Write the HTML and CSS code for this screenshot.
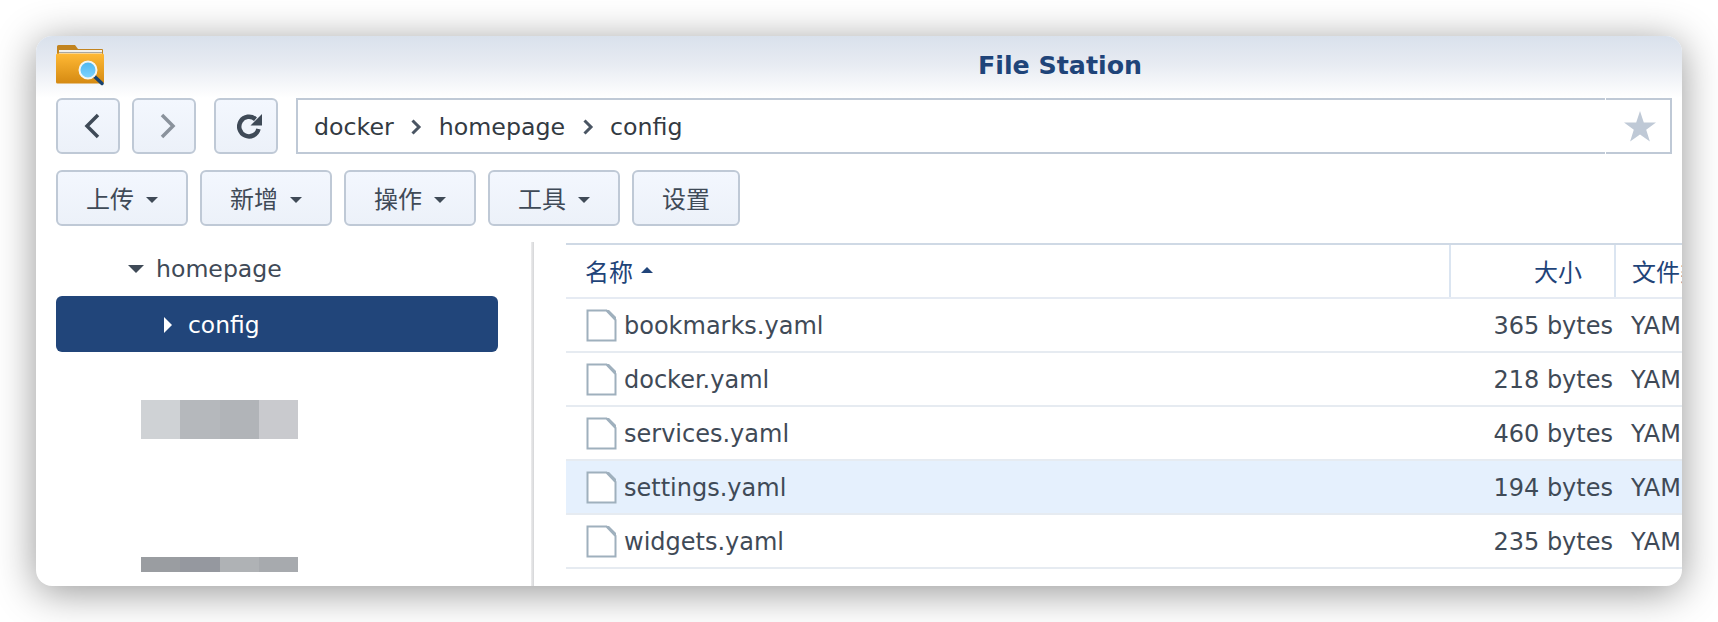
FILE: index.html
```html
<!DOCTYPE html>
<html lang="zh">
<head>
<meta charset="utf-8">
<title>File Station</title>
<link rel="stylesheet" href="styles.css">
</head>
<body>
<div class="window">
  <header class="titlebar">
    <svg class="app-icon" width="50" height="42" viewBox="0 0 50 42">
      <defs>
        <linearGradient id="fold" x1="0" y1="0" x2="0" y2="1"><stop offset="0" stop-color="#ffb935"/><stop offset="1" stop-color="#d58a12"/></linearGradient>
        <linearGradient id="lens" x1="0" y1="0" x2="0" y2="1"><stop offset="0" stop-color="#4eb5ee"/><stop offset="1" stop-color="#7fd4ff"/></linearGradient>
      </defs>
      <path d="M1 1.500 Q1 0 2.500 0 H19 L22 4 H46 Q47 4 47 5 V14 H1 Z" fill="#c2841f"/>
      <rect x="3" y="5" width="43" height="5" fill="#f2f0ea"/>
      <rect x="3" y="7" width="43" height="1" fill="#a9a79f"/>
      <path d="M0 10 Q0 8.500 1.500 8.500 H46.500 Q48 8.500 48 10 V37 Q48 38.500 46.500 38.500 H1.500 Q0 38.500 0 37 Z" fill="url(#fold)"/>
      <path d="M38 31 L46 38.500" stroke="#18426e" stroke-width="3.500" stroke-linecap="round"/>
      <circle cx="32" cy="25" r="8.500" fill="url(#lens)" stroke="#f4f6f2" stroke-width="2"/>
    </svg>
    <h1 class="title">File Station</h1>
  </header>

  <div class="toolbar">
    <button class="btn btn-icon btn-shift" aria-label="back">
      <svg width="18" height="28" viewBox="0 0 18 28"><path d="M15 3 L4 14 L15 25" class="chev"/></svg>
    </button>
    <button class="btn btn-icon btn-shift" aria-label="forward">
      <svg width="18" height="28" viewBox="0 0 18 28"><path d="M3 3 L14 14 L3 25" class="chev chev-off"/></svg>
    </button>
    <button class="btn btn-icon btn-refresh btn-shift" aria-label="refresh">
      <svg width="26" height="26" viewBox="0 0 26 26"><path d="M21.500 16 A9.800 9.800 0 1 1 18.500 6.200" class="refresh"/><path d="M25 1 V12.500 H13.500 Z" fill="#3f4a57"/></svg>
    </button>
    <div class="path">
      <div class="crumbs">
        <span>docker</span>
        <svg class="sep" width="12" height="18" viewBox="0 0 12 18"><path d="M2.500 2.500 L9 9 L2.500 15.500"/></svg>
        <span>homepage</span>
        <svg class="sep" width="12" height="18" viewBox="0 0 12 18"><path d="M2.500 2.500 L9 9 L2.500 15.500"/></svg>
        <span>config</span>
      </div>
      <div class="fav">
        <svg width="32" height="31" viewBox="0 0 32 31"><polygon points="16,0 19.800,11.400 32,11.600 22.200,18.800 25.900,30.500 16,23.400 6.100,30.500 9.800,18.800 0,11.600 12.200,11.400" fill="#bfc9d6"/></svg>
      </div>
    </div>
  </div>

  <div class="actions">
    <button class="btn btn-menu"><span class="lbl">上传</span><i class="caret"></i></button>
    <button class="btn btn-menu"><span class="lbl">新增</span><i class="caret"></i></button>
    <button class="btn btn-menu"><span class="lbl">操作</span><i class="caret"></i></button>
    <button class="btn btn-menu"><span class="lbl">工具</span><i class="caret"></i></button>
    <button class="btn btn-plain"><span class="lbl">设置</span></button>
  </div>

  <div class="main">
    <aside class="tree">
      <div class="node node-open"><i class="tri-down"></i>homepage</div>
      <div class="node-sel"><i class="tri-right"></i>config</div>
      <div class="redact redact-a"><span></span><span></span><span></span><span></span></div>
      <div class="redact redact-b"><span></span><span></span><span></span><span></span></div>
    </aside>
    <div class="splitter"></div>
    <section class="list">
      <div class="row-head">
        <div class="col-name">名称<i class="tri-up"></i></div>
        <div class="col-size">大小</div>
        <div class="col-type">文件类型</div>
      </div>
      <div class="row">
        <div class="col-name"><svg class="file" width="31" height="33" viewBox="0 0 31 33"><path d="M1.500 1.500 H20.500 L29.500 11 V31.500 H1.500 Z" fill="#fff" stroke="#9fb0bd" stroke-width="2"/><path d="M19.500 1 L30 12 V8 L23 1 Z" fill="#9fb0bd"/></svg>bookmarks.yaml</div>
        <div class="col-bytes">365 bytes</div><div class="col-kind">YAML 文件</div>
      </div>
      <div class="row">
        <div class="col-name"><svg class="file" width="31" height="33" viewBox="0 0 31 33"><path d="M1.500 1.500 H20.500 L29.500 11 V31.500 H1.500 Z" fill="#fff" stroke="#9fb0bd" stroke-width="2"/><path d="M19.500 1 L30 12 V8 L23 1 Z" fill="#9fb0bd"/></svg>docker.yaml</div>
        <div class="col-bytes">218 bytes</div><div class="col-kind">YAML 文件</div>
      </div>
      <div class="row">
        <div class="col-name"><svg class="file" width="31" height="33" viewBox="0 0 31 33"><path d="M1.500 1.500 H20.500 L29.500 11 V31.500 H1.500 Z" fill="#fff" stroke="#9fb0bd" stroke-width="2"/><path d="M19.500 1 L30 12 V8 L23 1 Z" fill="#9fb0bd"/></svg>services.yaml</div>
        <div class="col-bytes">460 bytes</div><div class="col-kind">YAML 文件</div>
      </div>
      <div class="row row-hover">
        <div class="col-name"><svg class="file" width="31" height="33" viewBox="0 0 31 33"><path d="M1.500 1.500 H20.500 L29.500 11 V31.500 H1.500 Z" fill="#fff" stroke="#9fb0bd" stroke-width="2"/><path d="M19.500 1 L30 12 V8 L23 1 Z" fill="#9fb0bd"/></svg>settings.yaml</div>
        <div class="col-bytes">194 bytes</div><div class="col-kind">YAML 文件</div>
      </div>
      <div class="row">
        <div class="col-name"><svg class="file" width="31" height="33" viewBox="0 0 31 33"><path d="M1.500 1.500 H20.500 L29.500 11 V31.500 H1.500 Z" fill="#fff" stroke="#9fb0bd" stroke-width="2"/><path d="M19.500 1 L30 12 V8 L23 1 Z" fill="#9fb0bd"/></svg>widgets.yaml</div>
        <div class="col-bytes">235 bytes</div><div class="col-kind">YAML 文件</div>
      </div>
    </section>
  </div>
</div>
</body>
</html>
```
FILE: styles.css
```css
* { box-sizing: border-box; }
html, body { margin: 0; height: 100%; background: #fff; overflow: hidden; }
body {
  padding: 36px;
  font-family: "DejaVu Sans", "Noto Sans CJK SC", sans-serif;
  color: #3f4a57;
}
.window {
  width: 1646px;
  height: 550px;
  background: #fff;
  border-radius: 16px;
  overflow: hidden;
  display: flex;
  flex-direction: column;
  box-shadow: 0 6px 40px rgba(0, 0, 0, .42);
}
.titlebar {
  height: 62px;
  flex: none;
  display: flex;
  align-items: center;
  justify-content: center;
  position: relative;
  background: linear-gradient(#d9e1ec, #e7ebf2 45%, #fff 100%);
}
.app-icon { position: absolute; left: 20px; top: 9px; }
.title {
  margin: 0;
  font-size: 25.300px;
  font-weight: 700;
  color: #1f4479;
  padding: 0 0 4px 402px;
}
.btn {
  height: 56px;
  border: 2px solid #bfc9d6;
  border-radius: 6px;
  background: linear-gradient(#f3f7fe, #ecf1f9);
  font: inherit;
  color: #3f4a57;
  padding: 0;
  display: flex;
  align-items: center;
  justify-content: center;
  font-size: 24px;
  font-family: "Noto Sans CJK SC", sans-serif;
}
.lbl { padding-bottom: 2px; }
.toolbar {
  display: flex;
  flex: none;
  height: 56px;
  padding-left: 20px;
  gap: 12px;
}
.btn-icon { width: 64px; }
.btn-shift { padding-left: 7px; }
.btn-refresh { margin-left: 6px; }
.chev { fill: none; stroke: #3f4a57; stroke-width: 3.500; }
.chev-off { stroke: #8a929c; }
.refresh { fill: none; stroke: #3f4a57; stroke-width: 4.500; }
.path {
  width: 1376px;
  margin-left: 6px;
  height: 56px;
  border: 2px solid #bfc9d6;
  display: flex;
  background: #fff;
}
.crumbs {
  flex: 1;
  display: flex;
  align-items: center;
  padding: 2px 0 0 16px;
  gap: 16.500px;
  font-size: 23.700px;
  color: #333a42;
}
.sep { fill: none; stroke: #4a5563; stroke-width: 3; }
.fav {
  width: 65px;
  position: relative;
  display: flex;
  align-items: center;
  justify-content: center;
  padding-left: 4px;
}
.fav::before, .fav::after {
  content: "";
  position: absolute;
  left: 0;
  width: 1px;
  height: 2px;
  background: #fff;
}
.fav::before { top: -2px; }
.fav::after { bottom: -2px; }
.actions {
  display: flex;
  flex: none;
  margin-top: 16px;
  padding-left: 20px;
  gap: 12px;
}
.btn-menu { width: 132px; gap: 12px; }
.btn-plain { width: 108px; }
.caret {
  width: 0;
  height: 0;
  border-left: 6.500px solid transparent;
  border-right: 6.500px solid transparent;
  border-top: 6.500px solid #3f4a57;
  margin-top: 4px;
}
.main {
  flex: 1;
  display: flex;
  min-height: 0;
  margin-top: 16px;
}
.tree { width: 496px; flex: none; overflow: hidden; }
.node {
  height: 54px;
  display: flex;
  align-items: center;
  padding-left: 92px;
  font-size: 23.600px;
}
.tri-down {
  width: 0;
  height: 0;
  border-left: 8px solid transparent;
  border-right: 8px solid transparent;
  border-top: 8px solid #3f4a57;
  margin-right: 12px;
}
.node-sel {
  height: 56px;
  margin: 0 34px 0 20px;
  background: #21457a;
  border-radius: 6px;
  color: #fff;
  display: flex;
  align-items: center;
  padding: 1px 0 0 108px;
  font-size: 23.400px;
}
.tri-right {
  width: 0;
  height: 0;
  border-top: 8px solid transparent;
  border-bottom: 8px solid transparent;
  border-left: 8px solid #fff;
  margin-right: 16px;
}
.redact {
  display: flex;
  width: 157px;
  margin-left: 105px;
  filter: blur(.5px);
}
.redact span { flex: 1; }
.redact-a { height: 39px; margin-top: 48px; }
.redact-b { height: 15px; margin-top: 118px; }
.redact-a span:nth-child(1) { background: #cfd2d5; }
.redact-a span:nth-child(2) { background: #b5b8bc; }
.redact-a span:nth-child(3) { background: #b1b4b8; }
.redact-a span:nth-child(4) { background: #c9cace; }
.redact-b span:nth-child(1) { background: #9a9da1; }
.redact-b span:nth-child(2) { background: #95989f; }
.redact-b span:nth-child(3) { background: #afb2b5; }
.redact-b span:nth-child(4) { background: #a7aaae; }
.splitter { width: 3px; flex: none; background: linear-gradient(90deg, #ececed, #d5d6d8); margin-left: -1px; }
.list {
  flex: 1;
  margin-left: 32px;
  min-width: 0;
  overflow: hidden;
}
.row-head, .row {
  display: grid;
  grid-template-columns: 883px 165px 1fr;
}
.row-head {
  height: 56px;
  margin-top: 1px;
  border-top: 2px solid #cfd9e5;
  border-bottom: 2px solid #e6ebf3;
  color: #1f4479;
  font-family: "Noto Sans CJK SC", sans-serif;
  font-size: 24px;
  align-items: stretch;
}
.row-head > div { display: flex; align-items: center; white-space: nowrap; overflow: hidden; padding-bottom: 2px; }
.row-head .col-name { padding-left: 19px; }
.col-size { justify-content: flex-end; padding-right: 32px; border-left: 2px solid #dbe5f1; }
.col-type { padding-left: 16px; border-left: 2px solid #dbe5f1; }
.tri-up {
  width: 0;
  height: 0;
  border-left: 6.500px solid transparent;
  border-right: 6.500px solid transparent;
  border-bottom: 6.500px solid #21457a;
  margin-left: 8px;
}
.row {
  height: 54px;
  border-bottom: 2px solid #e6ebf1;
  font-size: 24px;
  line-height: 28px;
  align-items: center;
}
.row > div { padding-top: 2px; }
.row-hover { background: #e5f0fd; }
.row .col-name { display: flex; align-items: center; padding-left: 20px; }
.file { margin-right: 7px; margin-bottom: 2px; flex: none; }
.col-bytes { text-align: right; padding-right: 1px; white-space: nowrap; }
.col-kind { padding-left: 17px; white-space: nowrap; overflow: hidden; }
```
